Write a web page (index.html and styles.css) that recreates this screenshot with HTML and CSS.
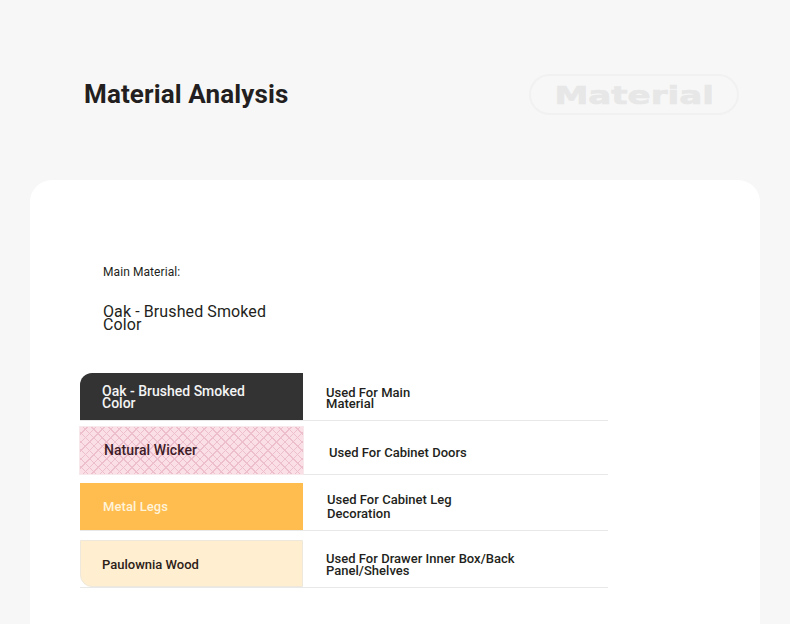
FILE: index.html
```html
<!DOCTYPE html>
<html lang="en">
<head>
<meta charset="utf-8">
<title>Material Analysis</title>
<link rel="stylesheet" href="styles.css">
</head>
<body>
<header class="head">
  <h1 class="title">Material Analysis</h1>
  <div class="pill"><span class="pill-text">Material</span></div>
</header>
<main class="card">
  <section class="main-material">
    <p class="label">Main Material:</p>
    <p class="value">Oak - Brushed Smoked<br>Color</p>
  </section>
  <section class="table">
    <div class="row row-oak">
      <div class="swatch swatch-oak"><span>Oak - Brushed Smoked<br>Color</span></div>
      <div class="use use-oak"><span>Used For Main<br>Material</span></div>
    </div>
    <div class="row row-wicker">
      <div class="swatch swatch-wicker"><span>Natural Wicker</span></div>
      <div class="use use-wicker"><span>Used For Cabinet Doors</span></div>
    </div>
    <div class="row row-metal">
      <div class="swatch swatch-metal"><span>Metal Legs</span></div>
      <div class="use use-metal"><span>Used For Cabinet Leg<br>Decoration</span></div>
    </div>
    <div class="row row-wood">
      <div class="swatch swatch-wood"><span>Paulownia Wood</span></div>
      <div class="use use-wood"><span>Used For Drawer Inner Box/Back<br>Panel/Shelves</span></div>
    </div>
  </section>
</main>
</body>
</html>
```
FILE: styles.css
```css
* { box-sizing: border-box; }
html, body { margin: 0; height: 624px; overflow: hidden; }
body {
  background: #f7f7f7;
  font-family: Roboto, "Liberation Sans", sans-serif;
  color: #231f20;
  padding: 74px 30px 0;
}
.head {
  display: flex;
  justify-content: space-between;
  align-items: center;
  height: 41px;
  padding: 0 21px 0 54px;
}
.title {
  margin: 0;
  font-size: 26px;
  line-height: 41px;
  font-weight: 700;
  letter-spacing: 0.13px;
}
.pill {
  width: 210px;
  height: 41px;
  border: 2px solid #f1f1f1;
  border-radius: 21px;
  display: flex;
  align-items: center;
  justify-content: center;
}
.pill-text {
  display: block;
  padding-top: 3px;
  font-family: "DejaVu Sans", sans-serif;
  font-weight: 700;
  font-size: 24px;
  line-height: 24px;
  color: #e7e7e7;
  -webkit-text-stroke: 0.6px #e7e7e7;
  transform: scaleX(1.42);
}
.card {
  margin-top: 65px;
  height: 460px;
  background: #fff;
  border-radius: 22px 22px 0 0;
  padding: 85px 0 0 50px;
}
.main-material { padding-left: 23px; }
.label {
  margin: 0;
  font-size: 12px;
  line-height: 14px;
  letter-spacing: 0.08px;
}
.value {
  margin: 26px 0 0;
  font-size: 16px;
  line-height: 13px;
  letter-spacing: 0.1px;
}
.table { margin-top: 42px; width: 528px; }
.row {
  display: grid;
  grid-template-columns: 223px 1fr;
  height: 48px;
  border-bottom: 1px solid #e8e8e8;
}
.row-wicker { margin-top: 6px; }
.row-metal { margin-top: 8px; }
.row-wood { margin-top: 9px; }
.swatch {
  display: flex;
  align-items: center;
  height: 47px;
  font-weight: 500;
}
.use {
  display: flex;
  align-items: center;
  font-size: 13px;
  font-weight: 500;
  letter-spacing: 0.02px;
}
.swatch-oak {
  background: #333;
  color: #f4f4f4;
  font-size: 14px;
  line-height: 12px;
  padding-left: 22px;
  border-radius: 12px 0 0 0;
}
.swatch-wicker {
  background-color: #fbdfe6;
  background-image:
    repeating-linear-gradient(45deg, transparent 0 5px, #edbfcc 5px 6px),
    repeating-linear-gradient(-45deg, transparent 0 5px, #edbfcc 5px 6px);
  color: #3d1c28;
  font-size: 14px;
  letter-spacing: 0.07px;
  padding-left: 24px;
  padding-bottom: 1px;
  outline: 1px solid #f7e8ec;
}
.swatch-metal {
  background: #ffbd4f;
  color: #fff3da;
  font-size: 13px;
  letter-spacing: 0.08px;
  padding-left: 23px;
}
.swatch-wood {
  background: #ffeecf;
  color: #2b2118;
  font-size: 13px;
  padding-left: 21px;
  padding-top: 2px;
  border: 1px solid #eee8dc;
  border-radius: 0 0 0 12px;
}
.use-oak { padding-left: 23px; padding-top: 3px; line-height: 11px; }
.use-wicker { padding-left: 26px; padding-top: 4px; line-height: 14px; }
.use-metal { padding-left: 24px; line-height: 14px; }
.use-wood { padding-left: 23px; padding-top: 3px; line-height: 12px; }
```
